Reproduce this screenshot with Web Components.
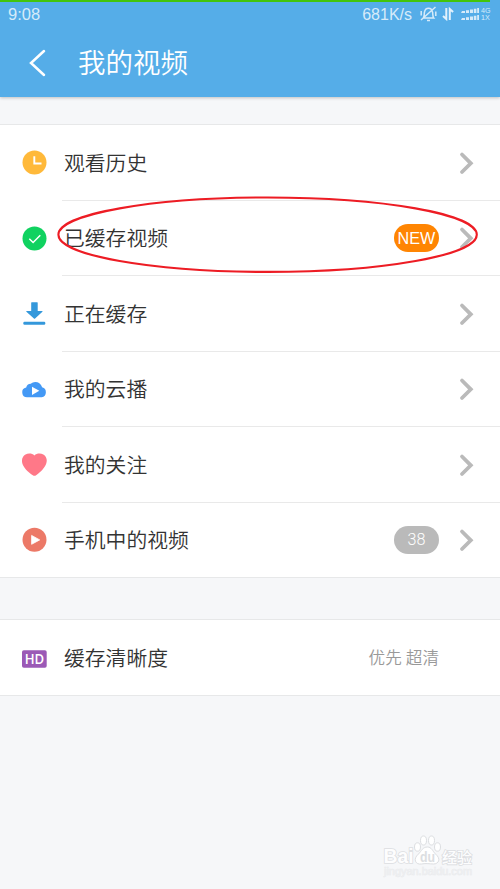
<!DOCTYPE html>
<html lang="zh-CN"><head><meta charset="utf-8"><title>我的视频</title>
<style>
body{margin:0;width:500px;height:889px;overflow:hidden;background:#f6f7f9;font-family:Roboto,"Noto Sans CJK SC",sans-serif;color:#333}
</style></head><body>
<video-page></video-page>
<script>
const define=(name,html)=>{
  const t=document.createElement('template');t.innerHTML=html;
  customElements.define(name,class extends HTMLElement{
    constructor(){super();this.attachShadow({mode:'open'}).append(t.content.cloneNode(true));}
  });
};
const icons={
 clock:'<circle cx="14.500" cy="13.500" r="12" fill="#ffb93a"/><path d="M14.300 7.200V14.500H21.500" fill="none" stroke="#fff" stroke-width="1.900"/>',
 check:'<circle cx="14.500" cy="13.500" r="12" fill="#10d260"/><path d="M9.300 13.800l3.800 3.700 7.200-7.300" fill="none" stroke="#fff" stroke-width="1.500"/>',
 down:'<path d="M11.200 2.800q0-.5.500-.5h5.500q.5 0 .5.500V11h4.400q.9 0 .3.700L15.100 18.500q-.6.600-1.200 0L6.400 11.700q-.6-.7.3-.7h4.500z" fill="#3498db"/><rect x="3.300" y="21.700" width="22" height="3" rx="1.200" fill="#3498db"/>',
 cloud:'<path d="M7.400 21.300a4.900 4.900 0 0 1-1.200-9.700 4.700 4.700 0 0 1 4.600-3.900 7 7 0 0 1 11.300 3.500A5.200 5.200 0 0 1 21.700 21.300z" fill="#4499f5"/><path d="M12 10.700v8.200l7.300-4.100z" fill="#fff"/>',
 heart:'<path d="M14.400 4.400C16.500 2.300 20.700 2 23.300 3.500c3.300 2 4.400 5.800 2.700 9.800-2 4.800-7.400 9.400-9.900 11-1.100.7-2.200.7-3.300 0C10 22.600 4.500 18.300 2.600 13.300 1.300 9.200 2.100 5.500 5.500 3.500 8.100 2 12.300 2.300 14.400 4.400z" fill="#ff7888"/>',
 play:'<circle cx="14.500" cy="13.800" r="12" fill="#ec7967"/><path d="M11.600 9.400v8.900l8.100-4.400z" fill="#fff" stroke="#fff" stroke-width=".8" stroke-linejoin="round"/>',
 hd:'<rect x="2" y="6.200" width="24.700" height="17.500" rx="1.800" fill="#9b59b6"/><text x="14.400" y="20" text-anchor="middle" font-family="Open Sans,sans-serif" font-weight="600" font-size="14.500" fill="#fff" textLength="19.500" lengthAdjust="spacingAndGlyphs">HD</text>'
};
customElements.define('menu-icon',class extends HTMLElement{
  constructor(){super();this.attachShadow({mode:'open'})}
  connectedCallback(){this.shadowRoot.innerHTML='<style>:host{display:block;width:28px;height:28px}svg{display:block}</style><svg width="28" height="28" viewBox="0 0 28 28">'+icons[this.getAttribute('name')]+'</svg>';}
});
define('status-bar',`<style>
:host{display:flex;height:28px;box-sizing:border-box;padding:0 8px 0 8px;align-items:center;color:#d6ebf9;font-size:16.500px;line-height:27px;background:linear-gradient(90deg,#43c40b 490px,#55ade8 490px) 0 0/100% 2px no-repeat}
.time{font-family:"Liberation Sans",sans-serif;font-size:16.500px}
.speed{margin-left:auto;font-family:"Liberation Sans",sans-serif;font-size:16px}svg{display:block;flex:none}
span{white-space:nowrap}.bell{margin-left:8px}.arrows{margin-left:5px}.signal{margin-left:7px}
.net{display:grid;width:11px;margin-left:1px}
.net span{display:block;height:7px;font:6.500px/7px "Liberation Sans",sans-serif;transform:scaleX(1.100);transform-origin:0 50%}
</style><span class="time">9:08</span><span class="speed">681K/s</span>
<svg class="bell" width="17" height="18" viewBox="0 0 17 18" fill="none" stroke="#d6ebf9" stroke-width="1.500"><path d="M3.300 13c1.300-1.500.7-4 1.200-6C5 4.500 6.500 3.300 8.500 3.300S12 4.500 12.500 7c.5 2-.1 4.500 1.200 6zM7 15.500h3M1 15L15.500 2M1.200 6v4.500M15.800 6.500V11"/></svg>
<svg class="arrows" width="12" height="14" viewBox="0 0 12 14" fill="none" stroke="#e1f1fc" stroke-width="2"><path d="M4.300 1v11L1 9M7.800 13V2L11.100 5"/></svg>
<svg class="signal" width="19" height="14" viewBox="0 0 19 14" fill="#d6ebf9"><path d="M1 4h3v2H0zM5 3.300h3V6H5zM9 2.500h3V6H9zM12.800 1.700h2.600V6h-2.600zM16.200 1H18v5h-1.800zM1 11h3v2H0zM5 10.300h3V13H5zM9 9.500h3V13H9zM12.800 8.700h2.600V13h-2.600zM16.200 8H18v5h-1.800z"/></svg>
<span class="net"><span>4G</span><span>1X</span></span>`);
define('title-bar',`<style>
:host{display:flex;height:69px;box-sizing:border-box;align-items:center;padding:2px 28px 0;color:#fff}
h1{margin:0 0 0 30px;font-size:27.500px;line-height:40px;font-weight:350}
svg{display:block;margin-top:-2px}
</style><svg width="20" height="30" viewBox="0 0 20 30" fill="none" stroke="#fff" stroke-width="2.500" stroke-linecap="round"><path d="M16 3L3 15l13 12"/></svg><h1><slot></slot></h1>`);
define('menu-group',`<style>:host{display:block;background:#fff;border-top:1px solid #e7e8e9}</style><slot></slot>`);
define('count-badge',`<style>:host{display:flex;width:45px;height:28px;border-radius:14px;align-items:center;justify-content:center;background:var(--badge,#bababa);color:#fff;font:350 16.200px/28px var(--badge-font,Roboto),sans-serif}</style><span><slot></slot></span>`);
define('menu-row',`<style>
:host{display:flex;align-items:center;height:75px;padding-left:20px;box-sizing:border-box}
:host([tall]){height:76px}
.body{display:flex;align-items:center;flex:1;align-self:stretch;margin-left:14px;padding:0 26px 0 2px;border-bottom:1px solid #e9e9e9}
:host([last]){border-bottom:1px solid #e7e8e9}:host([last]) .body{border:0}
.label{font-size:20.800px;line-height:30px;white-space:nowrap;font-weight:350;padding-top:2px}
.extra{margin-left:auto;margin-right:20px;font-size:16.600px;line-height:24px;font-weight:350;color:#999}
:host([plain]) .extra{padding-top:2px}
svg{display:block}:host([plain]) svg{visibility:hidden}
</style><slot name="icon"></slot><div class="body"><span class="label"><slot></slot></span><span class="extra"><slot name="extra"></slot></span>
<svg width="15" height="24" viewBox="0 0 15 24" fill="none" stroke="#bababa" stroke-width="3.800" stroke-linecap="round" stroke-linejoin="miter"><path d="M3 3.500L11.800 12.300l-8.800 8.700"/></svg></div>`);
define('highlight-ring',`<style>:host{position:absolute;left:56px;top:195px;pointer-events:none}svg{display:block}</style>
<svg width="424" height="80" viewBox="0 0 424 80"><ellipse cx="211.600" cy="39.700" rx="209.200" ry="37.200" fill="none" stroke="#ed1c24" stroke-width="2.100"/></svg>`);
define('water-mark',`<style>:host{position:absolute;left:380px;top:833px}svg{display:block}text{font-family:"Liberation Sans","Noto Sans CJK SC",sans-serif;fill:#fdfdfe;stroke:#dcdee1;stroke-width:1.600;paint-order:stroke}</style>
<svg width="100" height="48" viewBox="0 0 100 48"><g fill="#fff" stroke="#dcdee1" stroke-width="1"><ellipse cx="37.500" cy="14" rx="3" ry="4.200"/><ellipse cx="43.500" cy="7.500" rx="3" ry="4.500"/><ellipse cx="51.500" cy="7.500" rx="3" ry="4.500"/><ellipse cx="57.500" cy="14" rx="3" ry="4.200"/><path d="M47.500 14c4 0 5 4 8 7 6 5 3 10-2 10-4 0-7-1-12 0-6 1-9-5-3-10 3-3 4-7 9-7z"/></g>
<text x="3.500" y="30" font-size="20" font-weight="700" textLength="30" lengthAdjust="spacingAndGlyphs">Bai</text>
<text x="40" y="28.500" font-size="14" font-weight="700" style="fill:#dcdee1;stroke:none" textLength="15" lengthAdjust="spacingAndGlyphs">du</text>
<text x="62" y="29.500" font-size="15" font-weight="500" textLength="30">经验</text>
<text x="4" y="42.300" font-size="10.500" style="fill:#eeeff1;stroke:#e6e8ea;stroke-width:.5" textLength="88" lengthAdjust="spacingAndGlyphs">jingyan.baidu.com</text></svg>`);
define('video-page',`<style>
:host{display:flex;flex-direction:column;position:relative;width:500px;height:889px;overflow:hidden}
header{height:97px;background:#55ade8;box-shadow:0 1px 3px rgba(0,0,0,.22);flex:none}
menu-group{flex:none}.main{margin-top:27px}.quality{margin-top:41px}
.new{--badge:#ff8502;--badge-font:"Liberation Sans"}
</style>
<header><status-bar></status-bar><title-bar>我的视频</title-bar></header>
<menu-group class="main">
<menu-row tall><menu-icon slot="icon" name="clock"></menu-icon>观看历史</menu-row>
<menu-row><menu-icon slot="icon" name="check"></menu-icon>已缓存视频<count-badge slot="extra" class="new">NEW</count-badge></menu-row>
<menu-row tall><menu-icon slot="icon" name="down"></menu-icon>正在缓存</menu-row>
<menu-row><menu-icon slot="icon" name="cloud"></menu-icon>我的云播</menu-row>
<menu-row tall><menu-icon slot="icon" name="heart"></menu-icon>我的关注</menu-row>
<menu-row last><menu-icon slot="icon" name="play"></menu-icon>手机中的视频<count-badge slot="extra">38</count-badge></menu-row>
</menu-group>
<menu-group class="quality"><menu-row tall last plain><menu-icon slot="icon" name="hd"></menu-icon>缓存清晰度<span slot="extra">优先 超清</span></menu-row></menu-group>
<highlight-ring></highlight-ring><water-mark></water-mark>`);
</script></body></html>
